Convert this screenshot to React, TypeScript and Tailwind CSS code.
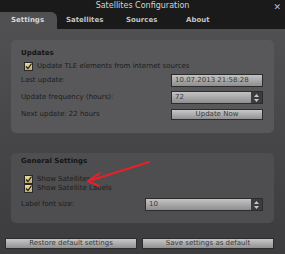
import { ReactNode } from "react";

const font = { fontFamily: '"DejaVu Sans", "Liberation Sans", sans-serif' };

function CheckBox() {
  return (
    <span className="flex h-[9px] w-[9px] items-center justify-center border border-[#2a2a2a] bg-gradient-to-b from-[#e8dca0] to-[#bfae6a]">
      <svg width="7" height="7" viewBox="0 0 7 7">
        <path d="M1 3.5 L3 5.5 L6.5 0.5" fill="none" stroke="#2a2418" strokeWidth="1.3" />
      </svg>
    </span>
  );
}

function Field({ children, spin = false }: { children: ReactNode; spin?: boolean }) {
  return (
    <div className="flex h-[13px] w-full items-stretch border border-[#2c2c2c] bg-gradient-to-b from-[#c4c4c4] to-[#8e8e8e] text-[7px] text-[#3a3a3a]">
      <span className="flex flex-1 items-center pl-[3px]">{children}</span>
      {spin && (
        <span className="flex w-[11px] flex-col items-center justify-center gap-[2px] bg-[#3c3c3e]">
          <svg width="5" height="3" viewBox="0 0 5 3">
            <path d="M0 3 L2.5 0 L5 3 Z" fill="#c8c8c8" />
          </svg>
          <svg width="5" height="3" viewBox="0 0 5 3">
            <path d="M0 0 L2.5 3 L5 0 Z" fill="#c8c8c8" />
          </svg>
        </span>
      )}
    </div>
  );
}

function PushButton({ label }: { label: string }) {
  return (
    <button className="flex h-[11px] w-full items-center justify-center border border-[#2c2c2c] bg-gradient-to-b from-[#c8c8c8] to-[#929292] text-[7px] text-[#3a3a3a]">
      {label}
    </button>
  );
}

function Row({ label, children }: { label: string; children?: ReactNode }) {
  return (
    <div className="flex h-[17px] items-center">
      <span className="flex-1 text-[7px] text-[#1c1c1c]">{label}</span>
      <div className="w-[92px]">{children}</div>
    </div>
  );
}

export default function App() {
  const tabs = ["Settings", "Satellites", "Sources", "About"];
  return (
    <div style={font} className="relative flex h-[254px] w-[285px] flex-col overflow-hidden bg-[#1a1a1a]">
      {/* Title bar */}
      <div className="relative flex h-[12px] items-center justify-center text-[8px] text-[#d4d4d4]">
        Satellites Configuration
        <span className="absolute right-[4px] top-[1px] text-[9px] font-bold text-[#bdbdbd]">✕</span>
      </div>

      {/* Tabs */}
      <div className="flex h-[17px] items-end">
        {tabs.map((t, i) => (
          <div
            key={t}
            className={
              i === 0
                ? "flex h-[17px] w-[57px] items-center pl-[11px] rounded-tr-[6px] bg-[#505052] text-[7px] font-bold text-[#d8d8d8]"
                : "flex h-[17px] w-[60px] items-center pl-[9px] text-[7px] font-bold text-[#c4c4c4]"
            }
          >
            {t}
          </div>
        ))}
      </div>

      {/* Content */}
      <div className="flex flex-1 flex-col bg-gradient-to-b from-[#505052] to-[#3c3c3e] px-[11px] pt-[11px] pb-[5px]">
        <div className="flex h-[93px] flex-col rounded-[5px] bg-[#58585a] px-[10px] pr-[11px]">
          <div className="flex h-[18px] items-end text-[7px] font-bold text-[#141414]">Updates</div>
          <div className="flex h-[14px] items-center gap-[4px] pl-[3px] pt-[3px] text-[7px] text-[#1c1c1c]">
            <CheckBox />
            Update TLE elements from internet sources
          </div>
          <Row label="Last update:">
            <Field>10.07.2013 21:58:28</Field>
          </Row>
          <Row label="Update frequency (hours):">
            <Field spin>72</Field>
          </Row>
          <Row label="Next update: 22 hours">
            <PushButton label="Update Now" />
          </Row>
        </div>

        <div className="mt-[20px] flex h-[70px] flex-col rounded-[5px] bg-[#4e4e50] px-[10px] pr-[11px]">
          <div className="flex h-[13px] items-end text-[7px] font-bold text-[#141414]">General Settings</div>
          <div className="mt-[9px] flex h-[9px] items-center gap-[4px] pl-[3px] text-[7px] text-[#1c1c1c]">
            <CheckBox />
            Show Satellites
          </div>
          <div className="flex h-[9px] items-center gap-[4px] pl-[3px] text-[7px] text-[#1c1c1c]">
            <CheckBox />
            Show Satellite Labels
          </div>
          <div className="mt-[5px] flex h-[13px] items-center">
            <span className="flex-1 text-[7px] text-[#1c1c1c]">Label font size:</span>
            <div className="w-[118px]">
              <Field spin>10</Field>
            </div>
          </div>
        </div>

        <div className="mt-auto flex gap-[5px] px-[-6px]">
          <div className="-ml-[6px] w-[135px]">
            <PushButton label="Restore default settings" />
          </div>
          <div className="w-[135px]">
            <PushButton label="Save settings as default" />
          </div>
        </div>
      </div>

      {/* Red annotation arrow */}
      <svg className="absolute left-0 top-0" width="285" height="254" viewBox="0 0 285 254">
        <path d="M149 162 L92 180" stroke="#e8202a" strokeWidth="2" strokeLinecap="round" />
        <path d="M88 181 L100 173 M88 181 L99 186" stroke="#e8202a" strokeWidth="2" strokeLinecap="round" />
      </svg>
    </div>
  );
}
